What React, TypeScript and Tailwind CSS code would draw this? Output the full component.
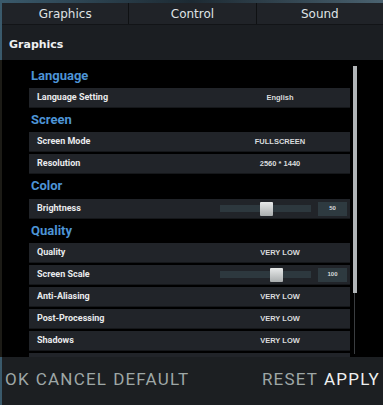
import React from 'react';

type Row =
  | { kind: 'value'; label: string; value: string }
  | { kind: 'slider'; label: string; value: number; pos: number }
  | { kind: 'empty'; label: string };

const sections: { title: string; gap: string; rows: Row[] }[] = [
  { title: 'Language', gap: 'h-[22px]', rows: [{ kind: 'value', label: 'Language Setting', value: 'English' }] },
  {
    title: 'Screen',
    gap: 'h-[22px]',
    rows: [
      { kind: 'value', label: 'Screen Mode', value: 'FULLSCREEN' },
      { kind: 'value', label: 'Resolution', value: '2560 * 1440' },
    ],
  },
  { title: 'Color', gap: 'h-[23px]', rows: [{ kind: 'slider', label: 'Brightness', value: 50, pos: 40 }] },
  {
    title: 'Quality',
    gap: 'h-[22px]',
    rows: [
      { kind: 'value', label: 'Quality', value: 'VERY LOW' },
      { kind: 'slider', label: 'Screen Scale', value: 100, pos: 50 },
      { kind: 'value', label: 'Anti-Aliasing', value: 'VERY LOW' },
      { kind: 'value', label: 'Post-Processing', value: 'VERY LOW' },
      { kind: 'value', label: 'Shadows', value: 'VERY LOW' },
      { kind: 'empty', label: 'next' },
    ],
  },
];

const tabs = ['Graphics', 'Control', 'Sound'];

const SettingRow = ({ row }: { row: Row }) => (
  <div className="flex h-[20px] shrink-0 items-center bg-[#212429] border-b border-[#15171a] mb-[2px]">
    {row.kind !== 'empty' && (
      <span className="pl-[8px] flex-1 text-[9px] font-bold text-[#e9ebed] [font-family:Roboto,sans-serif]">
        {row.label}
      </span>
    )}
    {row.kind === 'value' && (
      <span className="w-[140px] text-center text-[7.5px] font-bold text-[#dadcde] [font-family:'Liberation_Sans',Arial,sans-serif]">
        {row.value}
      </span>
    )}
    {row.kind === 'slider' && (
      <div className="w-[140px] flex items-center">
        <div className="relative ml-[10px] w-[91px] h-[7px] bg-[#2d383e]">
          <div
            className="absolute top-[-3.5px] w-[13px] h-[14px] bg-gradient-to-b from-[#e8eaea] to-[#a9adae] rounded-[1px]"
            style={{ left: `${row.pos}px` }}
          />
        </div>
        <div className="ml-[7px] w-[29px] h-[14px] bg-[#2e3a40] flex items-center justify-center text-[6px] font-bold text-[#d8dadc] [font-family:'Liberation_Sans',Arial,sans-serif]">
          {row.value}
        </div>
      </div>
    )}
  </div>
);

export default function App() {
  return (
    <div className="w-[383px] h-[405px] overflow-hidden flex flex-col bg-gradient-to-r from-[#3a5a6c] via-[#1d2a33] to-[#4a6270]">
      <div className="h-[3px] shrink-0" />
      {/* Tabs */}
      <div className="flex h-[22px] shrink-0 ml-[2px] bg-[#202328] border-b border-[#121417]">
        {tabs.map((tab, i) => (
          <div
            key={tab}
            className={`flex-1 flex items-center justify-center text-[12px] text-[#dfe2e5] [font-family:'DejaVu_Sans',sans-serif] ${
              i > 0 ? 'border-l border-[#0f1113]' : ''
            }`}
          >
            {tab}
          </div>
        ))}
      </div>
      {/* Header */}
      <div className="h-[35px] shrink-0 ml-[2px] bg-[#1b1e22] flex items-center pl-[7px] pt-[6px]">
        <span className="text-[11px] font-bold text-[#eef0f2] [font-family:'DejaVu_Sans',sans-serif]">Graphics</span>
      </div>
      {/* Content */}
      <div className="h-[297px] shrink-0 flex bg-[#000] border-l-2 border-[#1c1b16] overflow-hidden">
        <div className="w-[27px] shrink-0" />
        <div className="w-[321px] shrink-0 flex flex-col pt-[6px] overflow-hidden">
          {sections.map((s) => (
            <React.Fragment key={s.title}>
              <div
                className={`${s.gap} shrink-0 flex items-center pl-[2px] pb-[3px] text-[13px] font-bold text-[#4d94d6] [font-family:Roboto,sans-serif]`}
              >
                {s.title}
              </div>
              {s.rows.map((r) => (
                <SettingRow key={r.label} row={r} />
              ))}
            </React.Fragment>
          ))}
        </div>
        {/* Scrollbar */}
        <div className="ml-[3px] w-[4px] flex flex-col pt-[6px] pb-[3px]">
          <div className="h-[227px] bg-[#b2b6b8]" />
          <div className="flex-1 w-[1px] ml-[1px] bg-[#3a3d40]" />
        </div>
      </div>
      {/* Bottom bar */}
      <div className="flex-1 ml-[2px] bg-[#1c1f22] flex items-center gap-[6px] pb-[3px] pl-[3px] pr-[3px] text-[17px] leading-none tracking-[1.2px] [font-family:Roboto,sans-serif]">
        <span className="text-[#9ea7a6]">OK</span>
        <span className="text-[#9ea7a6]">CANCEL</span>
        <span className="text-[#9ea7a6]">DEFAULT</span>
        <span className="ml-auto text-[#9ea7a6]">RESET</span>
        <span className="text-[#eef0f0]">APPLY</span>
      </div>
    </div>
  );
}
